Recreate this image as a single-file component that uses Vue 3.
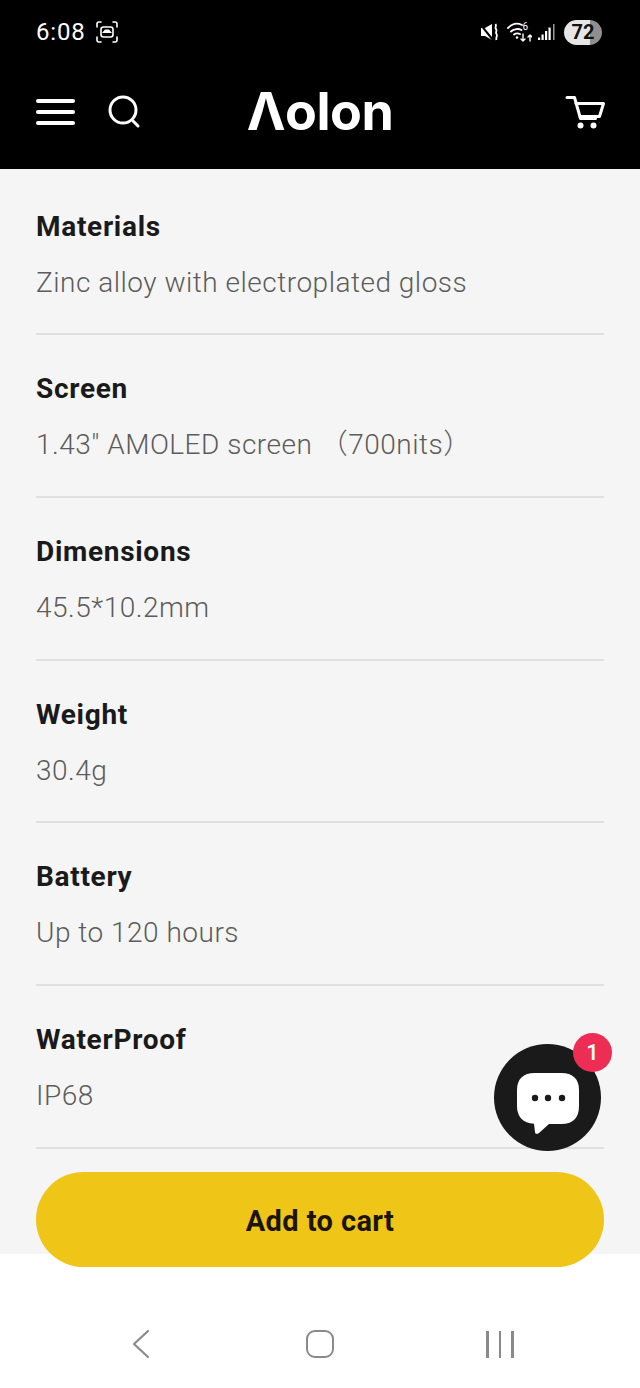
<script setup>
const specs = [
  { label: 'Materials', value: 'Zinc alloy with electroplated gloss' },
  { label: 'Screen', value: '1.43" AMOLED screen （700nits）' },
  { label: 'Dimensions', value: '45.5*10.2mm' },
  { label: 'Weight', value: '30.4g' },
  { label: 'Battery', value: 'Up to 120 hours' },
  { label: 'WaterProof', value: 'IP68' }
]
</script>

<template>
  <div class="page">
    <div class="top">
      <div class="status">
        <div class="status-left">
          <span class="time">6:08</span>
          <svg width="22" height="22" viewBox="0 0 22 22" fill="none" stroke="#fff" stroke-width="1.600" stroke-linecap="round">
            <path d="M1 6V3a2 2 0 0 1 2-2h2M17 1h2a2 2 0 0 1 2 2v3M21 16v3a2 2 0 0 1-2 2h-2M5 21H3a2 2 0 0 1-2-2v-3" />
            <rect x="5" y="6" width="12" height="10" rx="2.500" />
            <path d="M6 12 9 8.500h4l3 3.500z" fill="#fff" stroke="none" />
          </svg>
        </div>
        <div class="status-right">
          <svg class="icon-mute" width="18" height="18" viewBox="0 0 18 18" fill="#fff">
            <path d="M1 5h4l7-4v16l-7-4H1z" />
            <path d="M0 1l13 16" stroke="#000" stroke-width="2" />
            <path d="M15.500 1c1.500 2-1 3 .5 5s-1 3 .5 5-1 3 0 6" fill="none" stroke="#fff" stroke-width="1.800" />
          </svg>
          <svg width="25" height="20" viewBox="0 0 25 20" fill="none" stroke="#fff" stroke-width="1.800" stroke-linecap="round">
            <path d="M1 6c5-5 10-5 14-3M4 9.500c3-3 8-3 10.500-1.500M7 12.500c2-1.500 4-1.500 6-.5" />
            <circle cx="10" cy="15.500" r="1.200" fill="#fff" stroke="none" />
            <path d="M16 12v7M14 17l2 2 2-2M23 19v-6M21 15l2-2 2 2" stroke-width="1.400" />
            <text x="15.500" y="8" font-size="10" fill="#fff" stroke="none" font-family="Roboto, sans-serif">6</text>
          </svg>
          <svg width="17" height="18" viewBox="0 0 17 18" fill="#fff">
            <rect x="0" y="14.500" width="2.200" height="2.500" />
            <rect x="3.500" y="11.500" width="2.200" height="5.500" />
            <rect x="7" y="8" width="2.200" height="9" />
            <rect x="10.500" y="4.500" width="2.200" height="12.500" />
            <rect x="15" y="1" width="1.500" height="16" opacity="0.6" />
          </svg>
          <div class="battery">72</div>
        </div>
      </div>
      <header class="bar">
        <div class="bar-left">
          <button class="burger" aria-label="Menu"><i></i><i></i><i></i></button>
          <svg width="34" height="34" viewBox="0 0 34 34" fill="none" stroke="#fff" stroke-width="3" stroke-linecap="round">
            <circle cx="16" cy="15" r="13" />
            <path d="M26 26l5 5" />
          </svg>
        </div>
        <div class="logo">Λolon</div>
        <div class="bar-right">
          <svg class="icon-cart" width="42" height="38" viewBox="0 0 42 38" fill="none" stroke="#fff" stroke-width="3" stroke-linejoin="round" stroke-linecap="round">
            <path d="M3 4.500h7.500l6 21h15" />
            <path d="M12 10.500h27.500l-4 13H16" />
            <circle cx="16.500" cy="32.500" r="3" fill="#fff" stroke="none" />
            <circle cx="29.500" cy="32.500" r="3" fill="#fff" stroke="none" />
          </svg>
        </div>
      </header>
    </div>

    <main class="specs">
      <section v-for="item in specs" :key="item.label" class="spec">
        <h3 class="spec-label">{{ item.label }}</h3>
        <p class="spec-value">{{ item.value }}</p>
      </section>
    </main>

    <nav class="nav">
      <svg width="20" height="30" viewBox="0 0 20 30" fill="none" stroke="#8a8a8a" stroke-width="2.200" stroke-linecap="round" stroke-linejoin="round">
        <path d="M18 2 4 15l14 13" />
      </svg>
      <div class="nav-home"></div>
      <div class="nav-recent"><i></i><i></i><i></i></div>
    </nav>

    <button class="cart-btn">Add to cart</button>

    <div class="chat">
      <svg width="62" height="61" viewBox="0 0 62 61">
        <path d="M18 0h26c12 0 18 6 18 17v16c0 12-6 18-18 18H32L22 60c-2 1.500-4 1-4-1l-1-8.200C6 50 0 44 0 33V17C0 6 6 0 18 0z" fill="#fff" />
        <circle cx="18" cy="25" r="3.200" fill="#1a1a1a" />
        <circle cx="31" cy="25" r="3.200" fill="#1a1a1a" />
        <circle cx="45" cy="25" r="3.200" fill="#1a1a1a" />
      </svg>
      <span class="chat-badge">1</span>
    </div>
  </div>
</template>

<style>
html, body { margin: 0; background: #fff; }
</style>

<style scoped>
.page {
  position: relative;
  display: flex;
  flex-direction: column;
  width: 640px;
  height: 1388px;
  overflow: hidden;
  background: #fff;
  font-family: Roboto, "Noto Sans CJK SC", sans-serif;
}

.top { background: #000; height: 169px; color: #fff; }

.status {
  display: flex;
  justify-content: space-between;
  align-items: center;
  height: 64px;
  padding: 0 38px 0 36px;
}
.status-left { display: flex; align-items: center; gap: 11px; }
.time { font-size: 24px; font-weight: 400; letter-spacing: 0.8px; }
.status-right { display: flex; align-items: center; gap: 6px; }
.icon-mute { margin-right: 3px; }
.battery {
  width: 38px;
  height: 25px;
  margin-left: 3px;
  border-radius: 13px;
  background: linear-gradient(90deg, #e6e6e6 68%, #8f8f8f 68%);
  color: #111;
  font-size: 20px;
  font-weight: 700;
  line-height: 25px;
  text-align: center;
}

.bar {
  display: grid;
  grid-template-columns: 1fr auto 1fr;
  align-items: center;
  height: 95px;
  padding: 0 36px;
}
.bar-left { display: flex; align-items: center; gap: 32px; }
.bar-right { display: flex; justify-content: flex-end; }
.icon-cart { margin-right: -2px; }
.burger {
  display: flex;
  flex-direction: column;
  gap: 7px;
  width: 39px;
  padding: 0;
  border: 0;
  background: none;
}
.burger i { display: block; height: 4px; border-radius: 2px; background: #fff; }
.logo {
  font-family: Inter, sans-serif;
  font-size: 52px;
  font-weight: 700;
  letter-spacing: -0.500px;
  line-height: 1;
}

.specs { flex: 1; min-height: 0; padding: 3.500px 36px 0; background: #f5f5f5; }
.spec { padding: 34px 0 30.700px; border-bottom: 2px solid #e0e0e0; }
.spec-label {
  margin: 0 0 16px;
  color: #1a1a1a;
  font-size: 28px;
  font-weight: 700;
  line-height: 40px;
  letter-spacing: 0.700px;
}
.spec-value {
  margin: 0;
  color: #5c5c5c;
  font-size: 28px;
  font-weight: 300;
  line-height: 40px;
  letter-spacing: 0.500px;
}

.nav {
  display: grid;
  grid-template-columns: repeat(3, 180px);
  justify-items: center;
  align-items: center;
  height: 134px;
  padding: 46px 50px 0;
  box-sizing: border-box;
  background: #fff;
}
.nav-home {
  width: 24px;
  height: 24px;
  border: 2.500px solid #8a8a8a;
  border-radius: 9px;
}
.nav-recent { display: flex; gap: 10px; }
.nav-recent i { display: block; width: 2.500px; height: 27px; background: #8a8a8a; }

.cart-btn {
  position: absolute;
  left: 36px;
  top: 1172px;
  width: 568px;
  height: 95px;
  padding: 2px 0 0;
  border: 0;
  border-radius: 48px;
  background: #efc517;
  color: #1c1408;
  font-family: inherit;
  font-size: 29px;
  font-weight: 700;
  letter-spacing: 0.400px;
}

.chat {
  position: absolute;
  left: 494px;
  top: 1044px;
  display: flex;
  align-items: center;
  justify-content: center;
  box-sizing: border-box;
  width: 107px;
  height: 107px;
  padding-top: 12px;
  border-radius: 50%;
  background: #1a1a1a;
}
.chat-badge {
  position: absolute;
  top: -11px;
  right: -11px;
  width: 39px;
  height: 39px;
  border-radius: 50%;
  background: #ee2d55;
  color: #fff;
  font-size: 22px;
  font-weight: 500;
  line-height: 39px;
  text-align: center;
}
</style>
